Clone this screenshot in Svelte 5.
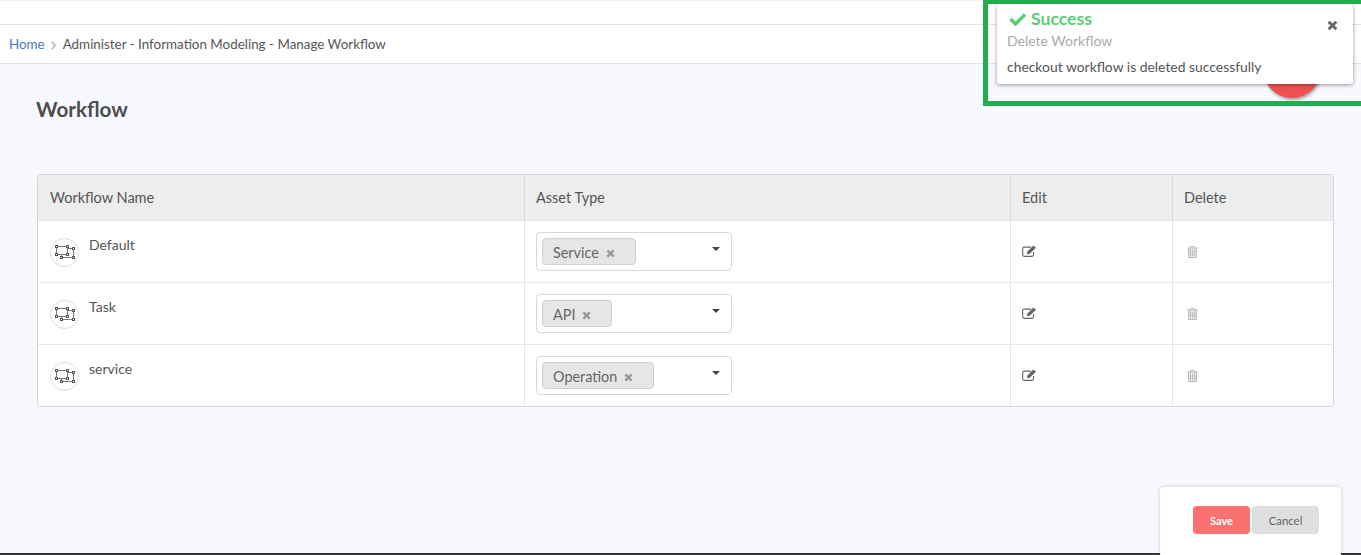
<script>
  const rows = [
    { name: "Default", tag: "Service" },
    { name: "Task", tag: "API" },
    { name: "service", tag: "Operation" }
  ];
</script>

<style>
  :global(body) {
    margin: 0;
    background: #f8f9fe;
    font-family: Lato, "Liberation Sans", sans-serif;
    color: #555;
    overflow: hidden;
  }

  .page {
    position: relative;
    height: 555px;
    overflow: hidden;
  }

  .topbar {
    height: 23px;
    background: #fff;
    border-top: 1px solid #f2f2f2;
    border-bottom: 1px solid #e2e2e2;
  }

  .crumbs {
    height: 38px;
    padding-left: 9px;
    background: #fff;
    border-bottom: 1px solid #e2e2e2;
    display: flex;
    align-items: center;
    font-size: 13.4px;
  }

  .crumbs a {
    color: #4a76c0;
  }

  .crumbs svg {
    margin: 2px 7px 0 6px;
  }

  h1 {
    margin: 0;
    padding: 32px 0 0 36px;
    font-size: 20.6px;
    line-height: 27px;
    font-weight: 700;
    color: #4d4d4d;
  }

  .grid {
    margin: 51px 27px 0 37px;
    border: 1px solid #d6d6d6;
    border-radius: 3px;
    background: #fff;
    overflow: hidden;
    font-size: 14px;
  }

  .row {
    display: grid;
    grid-template-columns: 486px 486px 162px 1fr;
    height: 61px;
    border-top: 1px solid #e8e8e8;
  }

  .head {
    height: 45px;
    background: #ededed;
    border-top: 0;
    border-bottom: 1px solid #d9d9d9;
    margin-bottom: -1px;
    line-height: 46px;
    font-size: 14.5px;
  }

  .cell {
    border-left: 1px solid #e6e6e6;
    padding-left: 11px;
    position: relative;
  }

  .cell:first-child {
    border-left: 0;
    padding-left: 12px;
  }

  .head .cell {
    border-left-color: #d9d9d9;
  }

  .name {
    display: flex;
    gap: 10px;
  }

  .name span {
    line-height: 20px;
    margin-top: 14px;
  }

  .badge {
    width: 27px;
    height: 27px;
    margin-top: 17px;
    border: 1px solid #dcdcdc;
    border-radius: 50%;
    display: flex;
    align-items: center;
    justify-content: center;
  }

  .select {
    margin-top: 11px;
    width: 196px;
    height: 39px;
    box-sizing: border-box;
    border: 1px solid #d9d9d9;
    border-radius: 4px;
    display: flex;
    align-items: center;
    padding-left: 5px;
    position: relative;
  }

  .select::after {
    content: "";
    position: absolute;
    right: 11px;
    top: 14px;
    border: 4px solid transparent;
    border-top-color: #444;
    border-bottom: 0;
  }

  .tag {
    height: 27px;
    box-sizing: border-box;
    padding: 2px 20px 0 10px;
    display: flex;
    align-items: center;
    gap: 7px;
    background: #e6e6e6;
    border: 1px solid #cfcfcf;
    border-radius: 4px;
    font-size: 14.4px;
    color: #666;
  }

  .tag svg {
    margin-top: 2px;
  }

  .edit {
    display: block;
    margin-top: 24px;
  }

  .trash {
    display: block;
    margin: 25px 0 0 3px;
  }

  .toast {
    position: absolute;
    left: 997px;
    top: 4px;
    width: 356px;
    height: 80px;
    background: #fff;
    border-radius: 3px;
    box-shadow: 0 1px 4px rgba(0, 0, 0, 0.4);
    z-index: 3;
    padding: 4px 10px;
    box-sizing: border-box;
  }

  .toast-title {
    display: flex;
    align-items: center;
    gap: 4px;
    margin-left: 2px;
    font-size: 17.6px;
    line-height: 22px;
    font-weight: 700;
    color: #58cf75;
  }

  .toast-sub {
    font-size: 14px;
    line-height: 17px;
    margin-top: 2px;
    color: #aaa;
  }

  .toast-msg {
    font-size: 13.9px;
    line-height: 17px;
    margin-top: 9px;
    color: #555;
  }

  .toast-close {
    position: absolute;
    right: 15px;
    top: 11px;
  }

  .fab {
    position: absolute;
    left: 1263px;
    top: 40px;
    width: 58px;
    height: 58px;
    border-radius: 50%;
    background: #f0504f;
    box-shadow: 1px 2px 3px rgba(0, 0, 0, 0.35);
  }

  .highlight {
    position: absolute;
    left: 983px;
    top: -1px;
    width: 400px;
    height: 107px;
    box-sizing: border-box;
    border: 5px solid #22ac4e;
    z-index: 4;
  }

  .footer-line {
    position: absolute;
    left: 0;
    right: 0;
    bottom: 0;
    height: 2px;
    background: #333;
  }

  .actions {
    position: absolute;
    left: 1160px;
    top: 487px;
    width: 181px;
    height: 70px;
    background: #fff;
    border-radius: 4px;
    box-shadow: 0 0 4px rgba(0, 0, 0, 0.2);
    display: flex;
    gap: 2px;
    padding: 19px 0 0 33px;
    box-sizing: border-box;
  }

  .btn {
    width: 57px;
    height: 28px;
    border: 0;
    border-radius: 4px;
    padding: 0;
    font-family: inherit;
    font-size: 11px;
  }

  .save {
    background: #fb7070;
    color: #fff;
    font-weight: 700;
  }

  .cancel {
    width: 67px;
    background: #dfdfdf;
    color: #666;
    font-size: 11.4px;
  }
</style>

<svelte:head>
  <title>Manage Workflow</title>
</svelte:head>

{#snippet cross(size, color)}
  <svg width={size} height={size} viewBox="0 0 10 10">
    <path d="M1.5 1.5 L8.5 8.5 M8.5 1.5 L1.5 8.5" stroke={color} stroke-width="2.6" fill="none" />
  </svg>
{/snippet}

<div class="page">
  <div class="topbar"></div>
  <div class="crumbs">
    <a>Home</a>
    <svg width="5" height="9" viewBox="0 0 5 9">
      <path d="M0.8 0.7 L4.2 4.5 L0.8 8.3" stroke="#b5b5b5" stroke-width="1.6" fill="none" />
    </svg>
    <span>Administer - Information Modeling - Manage Workflow</span>
  </div>

  <h1>Workflow</h1>

  <div class="grid">
    <div class="row head">
      <div class="cell">Workflow Name</div>
      <div class="cell">Asset Type</div>
      <div class="cell">Edit</div>
      <div class="cell">Delete</div>
    </div>
    {#each rows as row}
      <div class="row">
        <div class="cell name">
          <div class="badge">
            <svg width="20" height="15" viewBox="0 0 20 15" fill="#fff" stroke="#555" stroke-width="1">
              <path d="M1.5 1.5 H12.5 V9.5 H1.5 Z M12.5 3.5 H18.5 V12.5 H6.5 V9.5" fill="none" stroke-width="0.8" />
              <rect x="0.5" y="0.5" width="2" height="2" />
              <rect x="11.5" y="0.5" width="2" height="2" />
              <rect x="0.5" y="8.5" width="2" height="2" />
              <rect x="11.5" y="8.5" width="2" height="2" />
              <rect x="17.5" y="2.5" width="2" height="2" />
              <rect x="17.5" y="11.5" width="2" height="2" />
              <rect x="5.5" y="11.5" width="2" height="2" />
            </svg>
          </div>
          <span>{row.name}</span>
        </div>
        <div class="cell">
          <div class="select">
            <div class="tag">{row.tag} {@render cross(9, "#999")}</div>
          </div>
        </div>
        <div class="cell">
          <svg class="edit" width="15" height="12" viewBox="0 0 15 12">
            <path d="M11.5 7 V9.8 Q11.5 11.4 10 11.4 H2.2 Q0.7 11.4 0.7 9.8 V3.6 Q0.7 2.1 2.2 2.1 H9" stroke="#666" stroke-width="1.1" fill="none" />
            <path d="M5.4 6.4 L11.4 0.6 L14 2.8 L7.8 8.8 L5 9.2 Z" fill="#666" />
          </svg>
        </div>
        <div class="cell">
          <svg class="trash" width="11" height="12" viewBox="0 0 11 12" fill="#e4e4e4" stroke="#bdbdbd">
            <path d="M3.5 2 V0.5 H7.5 V2" fill="none" />
            <path d="M1.5 2 V11.5 H9.5 V2" />
            <path d="M0 2 H11 M3.5 4 V10 M5.5 4 V10 M7.5 4 V10" fill="none" />
          </svg>
        </div>
      </div>
    {/each}
  </div>

  <div class="fab"></div>

  <div class="toast">
    <div class="toast-title">
      <svg width="18" height="14" viewBox="0 0 18 14">
        <path d="M1.5 7 L6.5 12 L16 2.5" stroke="#58cf75" stroke-width="3.4" fill="none" />
      </svg>
      Success
    </div>
    <div class="toast-sub">Delete Workflow</div>
    <div class="toast-msg">checkout workflow is deleted successfully</div>
    <div class="toast-close">{@render cross(11, "#666")}</div>
  </div>
  <div class="highlight"></div>

  <div class="footer-line"></div>
  <div class="actions">
    <button class="btn save">Save</button>
    <button class="btn cancel">Cancel</button>
  </div>
</div>
